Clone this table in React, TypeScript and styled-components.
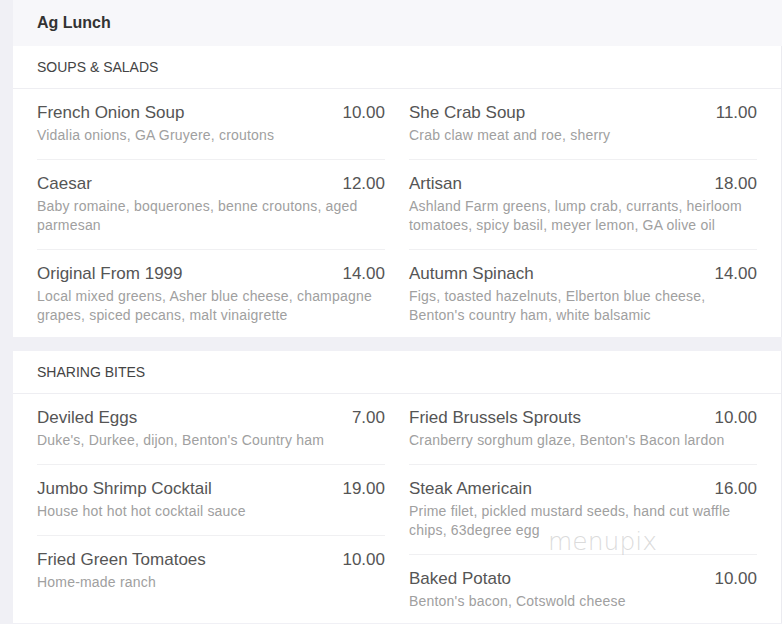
import React from 'react';
import styled, { createGlobalStyle } from 'styled-components';

type Item = { name: string; price: string; desc: string };
type Section = { title: string; left: Item[]; right: Item[] };

const GlobalStyle = createGlobalStyle`
  html, body {
    margin: 0;
    padding: 0;
    background: #f0f0f5;
    font-family: "Liberation Sans", Arial, sans-serif;
  }
`;

const Page = styled.div`
  position: relative;
  width: 782px;
  height: 624px;
  overflow: hidden;
  padding-left: 13px;
  box-sizing: border-box;
`;

const Header = styled.div`
  height: 46px;
  background: #f7f7fa;
  display: flex;
  align-items: center;
  padding-left: 24px;
  font-size: 16px;
  font-weight: bold;
  color: #333;
`;

const Card = styled.section`
  background: #fff;
  border-right: 1px solid #ebebf0;
  margin-bottom: 14px;
`;

const SectionTitle = styled.div`
  height: 42px;
  display: flex;
  align-items: center;
  padding-left: 24px;
  font-size: 14px;
  color: #444;
  text-transform: uppercase;
  border-bottom: 1px solid #eeeef2;
`;

const Columns = styled.div`
  display: grid;
  grid-template-columns: 1fr 1fr;
  column-gap: 24px;
  padding: 0 24px;
`;

const Column = styled.div`
  display: flex;
  flex-direction: column;
`;

const Row = styled.div`
  padding: 12px 0 14px;
  border-bottom: 1px solid #f0f0f2;
  &:last-of-type {
    border-bottom: none;
    padding-bottom: 12px;
  }
`;

const NameLine = styled.div`
  display: flex;
  justify-content: space-between;
  font-size: 17px;
  line-height: 23px;
  color: #555;
`;

const Desc = styled.div`
  margin-top: 2px;
  font-size: 14px;
  line-height: 19px;
  color: #a0a0a0;
  letter-spacing: 0.2px;
`;

const Watermark = styled.div`
  position: absolute;
  left: 548px;
  top: 527px;
  font-size: 25px;
  font-weight: 200;
  color: rgba(195, 195, 195, 0.6);
  font-family: "DejaVu Sans", sans-serif;
  pointer-events: none;
`;

const sections: Section[] = [
  {
    title: 'Soups & Salads',
    left: [
      { name: 'French Onion Soup', price: '10.00', desc: 'Vidalia onions, GA Gruyere, croutons' },
      { name: 'Caesar', price: '12.00', desc: 'Baby romaine, boquerones, benne croutons, aged parmesan' },
      { name: 'Original From 1999', price: '14.00', desc: 'Local mixed greens, Asher blue cheese, champagne grapes, spiced pecans, malt vinaigrette' },
    ],
    right: [
      { name: 'She Crab Soup', price: '11.00', desc: 'Crab claw meat and roe, sherry' },
      { name: 'Artisan', price: '18.00', desc: 'Ashland Farm greens, lump crab, currants, heirloom tomatoes, spicy basil, meyer lemon, GA olive oil' },
      { name: 'Autumn Spinach', price: '14.00', desc: "Figs, toasted hazelnuts, Elberton blue cheese, Benton's country ham, white balsamic" },
    ],
  },
  {
    title: 'Sharing Bites',
    left: [
      { name: 'Deviled Eggs', price: '7.00', desc: "Duke's, Durkee, dijon, Benton's Country ham" },
      { name: 'Jumbo Shrimp Cocktail', price: '19.00', desc: 'House hot hot hot cocktail sauce' },
      { name: 'Fried Green Tomatoes', price: '10.00', desc: 'Home-made ranch' },
    ],
    right: [
      { name: 'Fried Brussels Sprouts', price: '10.00', desc: "Cranberry sorghum glaze, Benton's Bacon lardon" },
      { name: 'Steak Americain', price: '16.00', desc: 'Prime filet, pickled mustard seeds, hand cut waffle chips, 63degree egg' },
      { name: 'Baked Potato', price: '10.00', desc: "Benton's bacon, Cotswold cheese" },
    ],
  },
];

const MenuRow: React.FC<Item> = ({ name, price, desc }) => (
  <Row>
    <NameLine>
      <span>{name}</span>
      <span>{price}</span>
    </NameLine>
    <Desc>{desc}</Desc>
  </Row>
);

export default function App() {
  return (
    <Page>
      <GlobalStyle />
      <Header>Ag Lunch</Header>
      {sections.map((s) => (
        <Card key={s.title}>
          <SectionTitle>{s.title}</SectionTitle>
          <Columns>
            <Column>
              {s.left.map((it) => <MenuRow key={it.name} {...it} />)}
            </Column>
            <Column>
              {s.right.map((it) => <MenuRow key={it.name} {...it} />)}
            </Column>
          </Columns>
        </Card>
      ))}
      <Watermark>menupix</Watermark>
    </Page>
  );
}
